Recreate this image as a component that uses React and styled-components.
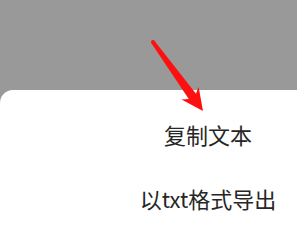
import React from 'react'
import styled, { createGlobalStyle } from 'styled-components';

const GlobalStyle = createGlobalStyle`
    html, body {
        margin: 0;
        padding: 0;
        background: #999999;
    }
    #root {
        width: 297px;
        height: 230px;
        overflow: hidden;
    }
`;

const options = ['复制文本', '以txt格式导出'];

export default function App() {
    return (
        <Screen>
            <GlobalStyle />
            <Backdrop />
            <Sheet>
                {options.map(label => (
                    <Option key={label}>{label}</Option>
                ))}
            </Sheet>
            <Pointer viewBox="0 0 297 230" width="297" height="230">
                <polygon
                    points="151.4,43.2 188.8,99 181.5,99.5 203,111 198.6,86.8 196,93.7 154.6,40.9"
                    fill="#ff1010"
                    strokeLinejoin="round"
                />
                <circle cx="153" cy="42" r="2" fill="#ff1010" />
            </Pointer>
        </Screen>
    );
}

const Screen = styled.div`
    position: relative;
    width: 297px;
    height: 230px;
    display: flex;
    flex-direction: column;
    background: #999999;
`;

const Backdrop = styled.div`
    height: 90px;
    flex: 0 0 90px;
`;

const Sheet = styled.div`
    flex: 1;
    display: flex;
    flex-direction: column;
    align-items: center;
    padding: 12px 0 0 119px;
    background: #ffffff;
    border-radius: 13px 0 0 0;
`;

const Option = styled.div`
    height: 64px;
    display: flex;
    align-items: center;
    font-family: "Noto Sans CJK SC", "Noto Sans", sans-serif;
    font-size: 22px;
    color: #262626;
    white-space: nowrap;
`;

const Pointer = styled.svg`
    position: absolute;
    left: 0;
    top: 0;
    pointer-events: none;
`;
